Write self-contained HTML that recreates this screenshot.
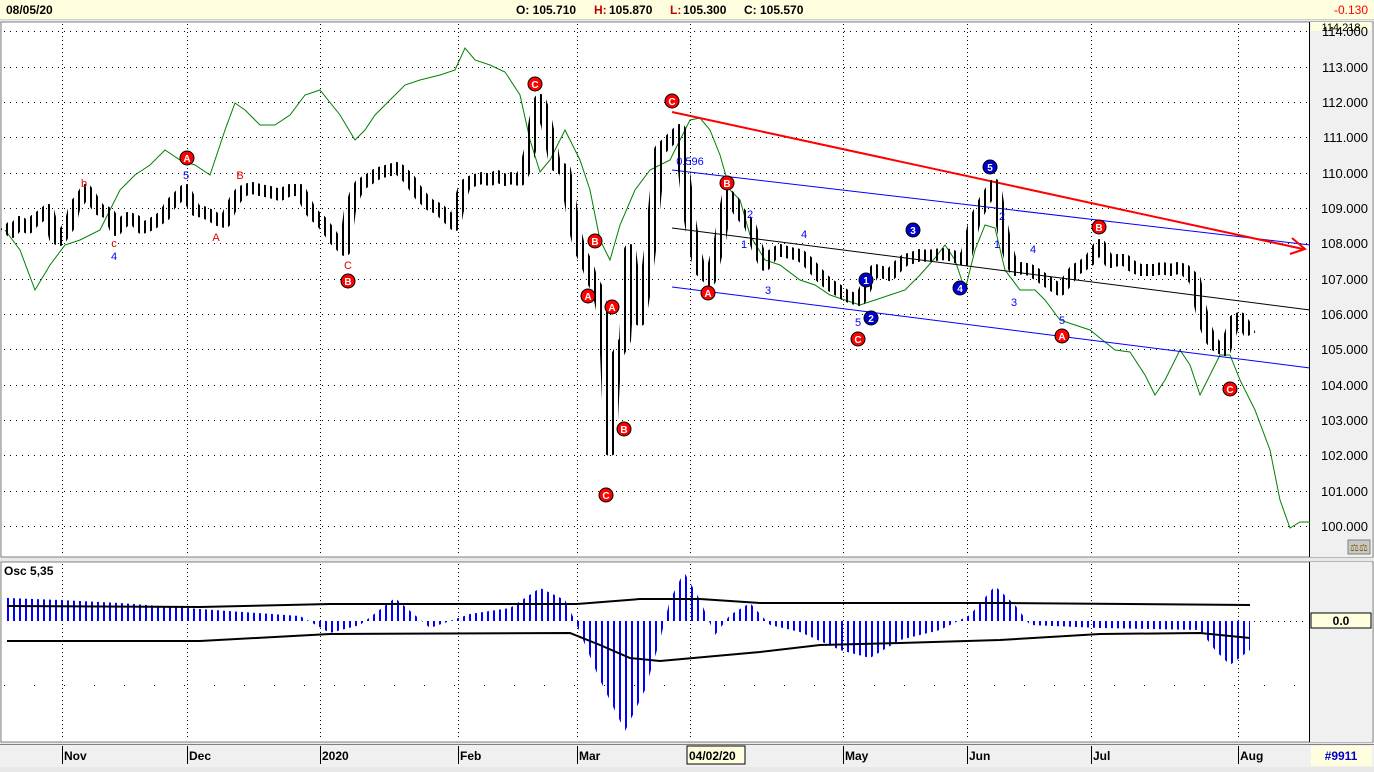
<!DOCTYPE html><html><head><meta charset="utf-8"><style>
body{margin:0;width:1374px;height:767px;overflow:hidden;background:#e8e8e8;font-family:"Liberation Sans",Arial,sans-serif}
svg text{font-family:"Liberation Sans",Arial,sans-serif}
</style></head><body>
<svg width="1374" height="767" viewBox="0 0 1374 767" xmlns="http://www.w3.org/2000/svg">
<defs>
<pattern id="hb" x="7" y="0" width="6" height="767" patternUnits="userSpaceOnUse"><rect x="0" y="0" width="2" height="767" fill="#0000ff"/></pattern>
<pattern id="pb" x="0" y="0" width="6" height="767" patternUnits="userSpaceOnUse"><rect x="0" y="0" width="2" height="767" fill="#000"/></pattern>
</defs>
<!-- top bar -->
<rect x="0" y="0" width="1374" height="19" fill="#ffffe0"/>
<line x1="0" y1="19.5" x2="1374" y2="19.5" stroke="#d0d0d0"/>
<text x="6" y="14" font-size="12" font-weight="bold">08/05/20</text>
<text x="516" y="14" font-size="12" font-weight="bold">O: 105.710</text>
<text x="594" y="14" font-size="12" font-weight="bold" fill="#c00000">H:</text>
<text x="609" y="14" font-size="12" font-weight="bold">105.870</text>
<text x="670" y="14" font-size="12" font-weight="bold" fill="#c00000">L:</text>
<text x="683" y="14" font-size="12" font-weight="bold">105.300</text>
<text x="744" y="14" font-size="12" font-weight="bold">C: 105.570</text>
<text x="1368" y="14" font-size="12" text-anchor="end" fill="#ff0000">-0.130</text>
<!-- main panel -->
<rect x="1" y="22" width="1372" height="535" fill="#fff" stroke="#808080"/>
<rect x="1310" y="22" width="62" height="535" fill="#f0f0f0"/>
<line x1="1309.5" y1="22" x2="1309.5" y2="557" stroke="#000"/>
<rect x="1311" y="22" width="60" height="9" fill="#ffffe0"/>
<text x="1341" y="31" font-size="11" text-anchor="middle">114.218</text>
<g stroke="#000" stroke-dasharray="1,5" stroke-width="1">
<line x1="4" y1="31.5" x2="1308" y2="31.5"/><line x1="4" y1="67.5" x2="1308" y2="67.5"/><line x1="4" y1="102.5" x2="1308" y2="102.5"/><line x1="4" y1="137.5" x2="1308" y2="137.5"/><line x1="4" y1="173.5" x2="1308" y2="173.5"/><line x1="4" y1="208.5" x2="1308" y2="208.5"/><line x1="4" y1="243.5" x2="1308" y2="243.5"/><line x1="4" y1="279.5" x2="1308" y2="279.5"/><line x1="4" y1="314.5" x2="1308" y2="314.5"/><line x1="4" y1="349.5" x2="1308" y2="349.5"/><line x1="4" y1="385.5" x2="1308" y2="385.5"/><line x1="4" y1="420.5" x2="1308" y2="420.5"/><line x1="4" y1="455.5" x2="1308" y2="455.5"/><line x1="4" y1="491.5" x2="1308" y2="491.5"/><line x1="4" y1="526.5" x2="1308" y2="526.5"/>
</g>
<g stroke="#000" stroke-dasharray="1,3">
<line x1="62.5" y1="24" x2="62.5" y2="556"/><line x1="187.5" y1="24" x2="187.5" y2="556"/><line x1="320.5" y1="24" x2="320.5" y2="556"/><line x1="458.5" y1="24" x2="458.5" y2="556"/><line x1="577.5" y1="24" x2="577.5" y2="556"/><line x1="690.5" y1="24" x2="690.5" y2="556"/><line x1="843.5" y1="24" x2="843.5" y2="556"/><line x1="967.5" y1="24" x2="967.5" y2="556"/><line x1="1091.5" y1="24" x2="1091.5" y2="556"/><line x1="1238.5" y1="24" x2="1238.5" y2="556"/>
</g>
<g font-size="13" text-anchor="end" fill="#000">
<text x="1368" y="36">114.000</text><text x="1368" y="72">113.000</text><text x="1368" y="107">112.000</text><text x="1368" y="142">111.000</text><text x="1368" y="178">110.000</text><text x="1368" y="213">109.000</text><text x="1368" y="248">108.000</text><text x="1368" y="284">107.000</text><text x="1368" y="319">106.000</text><text x="1368" y="354">105.000</text><text x="1368" y="390">104.000</text><text x="1368" y="425">103.000</text><text x="1368" y="460">102.000</text><text x="1368" y="496">101.000</text><text x="1368" y="531">100.000</text>
</g>
<rect x="1348" y="540" width="22" height="14" fill="#c8c8c8" stroke="#808080"/>
<text x="1359" y="551" font-size="10" text-anchor="middle" fill="#806000">⚖⚖</text>
<!-- green -->
<polyline fill="none" stroke="#008000" stroke-width="1" points="5,230 20,250 35,290 50,265 65,245 80,240 100,230 120,190 135,175 150,165 165,150 180,160 195,165 210,175 225,130 235,103 245,110 260,125 275,125 290,115 305,95 320,90 340,115 355,140 365,130 375,115 390,100 405,85 420,80 440,75 455,70 465,48 475,60 490,65 505,72 520,95 530,140 540,172 550,160 565,130 580,160 590,190 600,240 610,260 620,225 635,190 650,170 670,160 690,120 700,118 710,130 720,155 730,190 740,200 750,235 765,260 780,265 800,280 815,285 830,295 845,300 860,305 875,300 890,295 905,290 920,275 935,258 945,245 955,260 965,290 975,250 985,225 995,228 1005,270 1020,290 1035,290 1045,300 1060,320 1075,325 1090,330 1100,338 1115,350 1130,352 1145,375 1155,395 1165,380 1180,350 1190,365 1200,395 1210,375 1220,355 1230,355 1240,380 1255,410 1270,450 1280,500 1290,528 1300,522 1310,522"/>
<!-- channel lines -->
<line x1="672" y1="170" x2="1310" y2="245" stroke="#0000ff"/>
<line x1="672" y1="228" x2="1310" y2="310" stroke="#000"/>
<line x1="672" y1="287" x2="1310" y2="368" stroke="#0000ff"/>
<line x1="672" y1="112" x2="1303" y2="249" stroke="#ff0000" stroke-width="2"/>
<polyline points="1292,238 1305,249 1290,254" fill="none" stroke="#ff0000" stroke-width="2"/>
<!-- price bars -->
<polyline fill="none" stroke="url(#pb)" stroke-width="12" stroke-linejoin="round" points="5,225 12,232 20,222 28,228 35,220 42,215 48,210 55,238 60,240 66,230 70,225 75,205 80,200 86,190 90,195 96,205 100,210 106,212 110,215 116,230 120,225 128,218 135,220 142,228 150,225 158,220 165,215 170,205 175,200 180,195 185,190 190,200 195,210 203,212 210,215 218,220 225,222 230,210 235,200 240,193 245,190 252,188 260,190 270,192 280,195 290,190 300,190 305,200 310,210 315,216 320,220 328,230 335,240 340,245 345,250 348,225 350,210 355,195 360,185 368,180 375,175 382,172 390,170 396,168 400,170 405,175 410,180 415,188 420,195 425,200 430,205 435,207 440,210 448,218 455,225 460,200 465,185 470,182 475,180 482,178 490,180 497,176 505,180 512,178 520,180 525,170 530,150 535,120 540,100 545,115 548,130 552,148 555,165 560,168 565,170 570,200 575,230 580,250 585,260 589,270 592,280 595,285 598,290 602,310 605,330 608,400 610,450 612,420 615,360 620,350 625,340 628,290 630,250 635,290 640,320 645,290 650,250 655,200 660,150 665,145 670,140 675,135 680,130 685,180 690,220 695,250 700,270 705,275 710,280 715,260 720,240 724,215 728,195 733,200 738,210 744,218 750,225 758,250 765,265 772,255 780,250 790,253 800,255 808,262 815,270 822,278 830,285 838,290 845,295 852,298 860,300 867,285 875,270 882,272 890,275 898,266 905,260 912,258 920,255 928,256 935,255 942,254 950,255 958,258 965,260 970,240 975,220 980,210 985,200 990,192 995,185 1000,215 1005,240 1010,258 1015,270 1022,268 1030,270 1038,275 1045,280 1052,285 1060,290 1068,280 1075,270 1082,266 1090,260 1095,252 1100,245 1105,255 1110,262 1118,260 1125,260 1132,266 1140,270 1148,270 1155,270 1162,268 1170,270 1178,268 1185,270 1190,275 1195,280 1200,305 1205,325 1210,338 1215,345 1220,348 1225,350 1230,335 1235,320 1240,318 1245,325 1250,335"/>
<!-- markers -->
<g font-size="10" font-weight="bold" text-anchor="middle" fill="#fff">
<g fill="#ff0000" stroke="#000" stroke-width="1">
<circle cx="535" cy="84" r="7"/><circle cx="672" cy="101" r="7"/><circle cx="187" cy="158" r="7"/><circle cx="348" cy="281" r="7"/><circle cx="595" cy="241" r="7"/><circle cx="588" cy="296" r="7"/><circle cx="612" cy="307" r="7"/><circle cx="624" cy="429" r="7"/><circle cx="606" cy="495" r="7"/><circle cx="708" cy="293" r="7"/><circle cx="727" cy="183" r="7"/><circle cx="858" cy="339" r="7"/><circle cx="1062" cy="336" r="7"/><circle cx="1099" cy="227" r="7"/><circle cx="1230" cy="389" r="7"/>
</g>
<g fill="#0000cc" stroke="#000" stroke-width="1">
<circle cx="866" cy="280" r="7"/><circle cx="871" cy="318" r="7"/><circle cx="913" cy="230" r="7"/><circle cx="960" cy="288" r="7"/><circle cx="990" cy="167" r="7"/>
</g>
<text x="535" y="88">C</text><text x="672" y="105">C</text><text x="187" y="162">A</text><text x="348" y="285">B</text><text x="595" y="245">B</text><text x="588" y="300">A</text><text x="612" y="311">A</text><text x="624" y="433">B</text><text x="606" y="499">C</text><text x="708" y="297">A</text><text x="727" y="187">B</text><text x="858" y="343">C</text><text x="1062" y="340">A</text><text x="1099" y="231">B</text><text x="1230" y="393">C</text>
<text x="866" y="284">1</text><text x="871" y="322">2</text><text x="913" y="234">3</text><text x="960" y="292">4</text><text x="990" y="171">5</text>
</g>
<g font-size="11" text-anchor="middle">
<g fill="#e00000"><text x="84" y="187">b</text><text x="240" y="179">B</text><text x="114" y="247">c</text><text x="216" y="241">A</text><text x="348" y="269">C</text></g>
<g fill="#0000ff"><text x="186" y="179">5</text><text x="114" y="260">4</text><text x="750" y="218">2</text><text x="744" y="248">1</text><text x="804" y="238">4</text><text x="768" y="294">3</text><text x="858" y="326">5</text><text x="997" y="248">1</text><text x="1002" y="220">2</text><text x="1014" y="306">3</text><text x="1033" y="253">4</text><text x="1062" y="324">5</text><text x="690" y="165">0.596</text></g>
</g>
<!-- osc panel -->
<rect x="1" y="562" width="1372" height="180" fill="#fff" stroke="#808080"/>
<rect x="1310" y="562" width="62" height="180" fill="#f0f0f0"/>
<line x1="1309.5" y1="562" x2="1309.5" y2="742" stroke="#000"/>
<rect x="1311" y="613" width="60" height="15" fill="#ffffe0" stroke="#000"/>
<text x="1341" y="625" font-size="12" font-weight="bold" text-anchor="middle">0.0</text>
<text x="4" y="575" font-size="12" font-weight="bold">Osc 5,35</text>
<g stroke="#000" stroke-dasharray="1,3">
<line x1="62.5" y1="564" x2="62.5" y2="740"/><line x1="187.5" y1="564" x2="187.5" y2="740"/><line x1="320.5" y1="564" x2="320.5" y2="740"/><line x1="458.5" y1="564" x2="458.5" y2="740"/><line x1="577.5" y1="564" x2="577.5" y2="740"/><line x1="690.5" y1="564" x2="690.5" y2="740"/><line x1="843.5" y1="564" x2="843.5" y2="740"/><line x1="967.5" y1="564" x2="967.5" y2="740"/><line x1="1091.5" y1="564" x2="1091.5" y2="740"/><line x1="1238.5" y1="564" x2="1238.5" y2="740"/>
</g>
<g stroke="#000" stroke-dasharray="1,29"><line x1="4" y1="685.5" x2="1308" y2="685.5"/></g>
<line x1="1254" y1="621.5" x2="1308" y2="621.5" stroke="#000" stroke-dasharray="1,5"/>
<polygon fill="url(#hb)" points="7,598 60,600 120,603 200,609 300,616 330,633 360,625 395,598 430,628 470,614 510,608 540,588 565,600 575,621 600,680 625,731 645,690 660,640 670,600 684,572 700,600 715,635 730,615 750,603 770,625 800,632 840,650 870,658 900,640 940,630 970,615 995,586 1015,605 1030,625 1100,628 1200,630 1215,650 1230,665 1250,650 1250,621 7,621"/>
<polyline fill="none" stroke="#000" stroke-width="2" points="7,606 200,607 330,604 520,604 577,604 640,599 700,599 760,603 900,603 1000,603 1250,605"/>
<polyline fill="none" stroke="#000" stroke-width="2" points="7,641 200,641 330,634 570,633 600,645 630,658 660,661 760,652 820,645 900,643 1000,640 1100,634 1200,633 1250,638"/>
<!-- bottom axis -->
<rect x="0" y="744" width="1374" height="23" fill="#f0f0f0"/>
<line x1="0" y1="744.5" x2="1374" y2="744.5" stroke="#808080"/>
<rect x="1311" y="746" width="61" height="20" fill="#ffffe0"/>
<text x="1341" y="760" font-size="12" font-weight="bold" fill="#0000cc" text-anchor="middle">#9911</text>
<rect x="687" y="746" width="58" height="18" fill="#ffffe0" stroke="#000"/>
<g font-size="12" font-weight="bold">
<text x="64" y="760">Nov</text><text x="189" y="760">Dec</text><text x="322" y="760">2020</text><text x="460" y="760">Feb</text><text x="579" y="760">Mar</text><text x="689" y="760">04/02/20</text><text x="845" y="760">May</text><text x="969" y="760">Jun</text><text x="1093" y="760">Jul</text><text x="1240" y="760">Aug</text>
</g>
<g stroke="#000"><line x1="62.5" y1="746" x2="62.5" y2="764"/><line x1="187.5" y1="746" x2="187.5" y2="764"/><line x1="320.5" y1="746" x2="320.5" y2="764"/><line x1="458.5" y1="746" x2="458.5" y2="764"/><line x1="577.5" y1="746" x2="577.5" y2="764"/><line x1="843.5" y1="746" x2="843.5" y2="764"/><line x1="967.5" y1="746" x2="967.5" y2="764"/><line x1="1091.5" y1="746" x2="1091.5" y2="764"/><line x1="1238.5" y1="746" x2="1238.5" y2="764"/></g>
</svg>
</body></html>
